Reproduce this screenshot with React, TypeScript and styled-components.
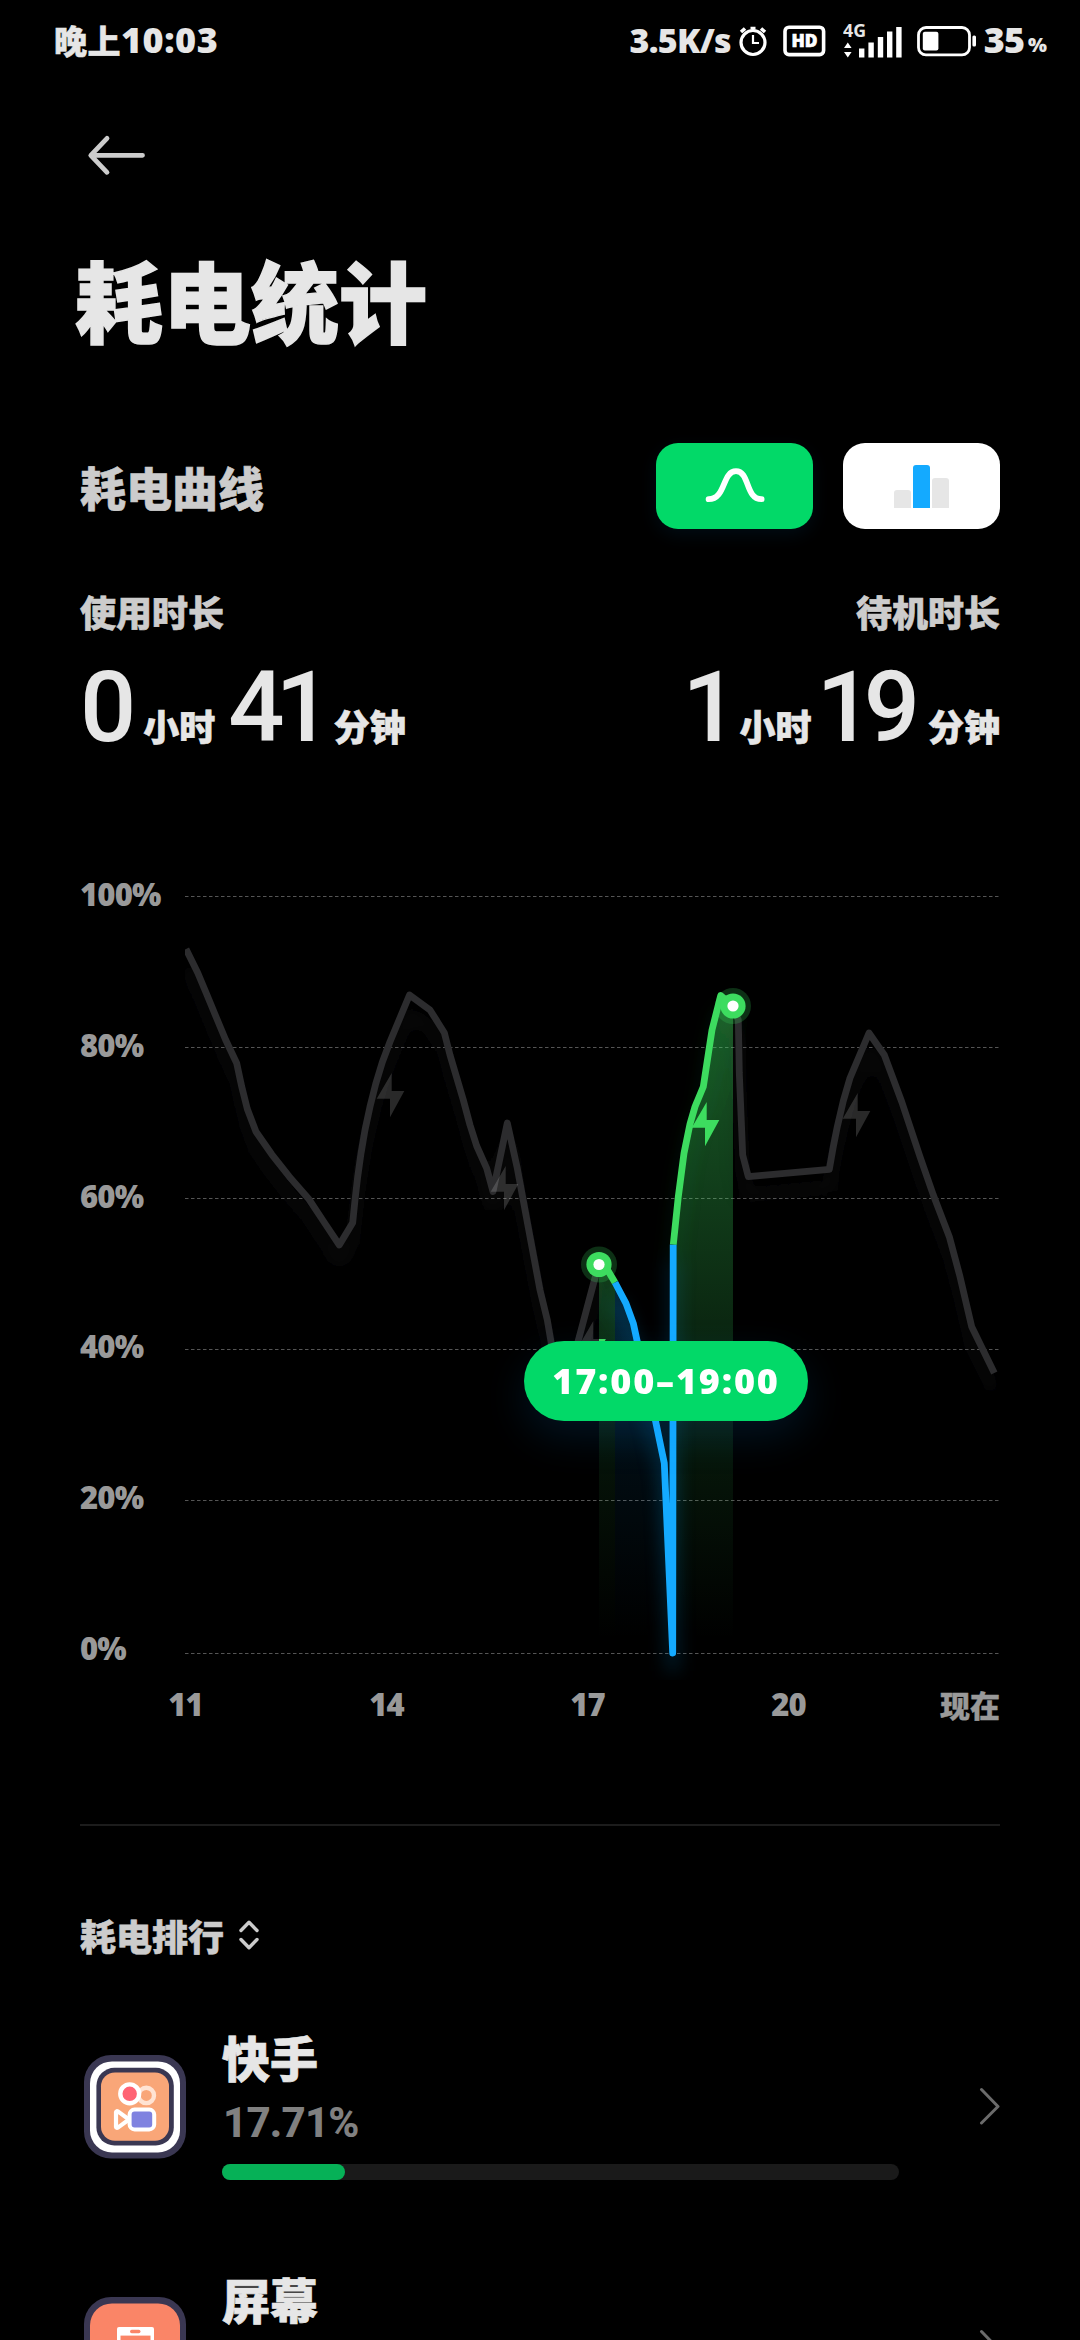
import React from 'react';
import styled, { createGlobalStyle } from 'styled-components';

const GlobalStyle = createGlobalStyle`
  * { box-sizing: border-box; }
  html, body { margin: 0; background: #000; }
  body { overflow: hidden; }
  svg { display: block; flex: none; }
`;

const cjk = `'Noto Sans CJK SC', sans-serif`;

const Screen = styled.main`
  width: 1080px;
  height: 2340px;
  overflow: hidden;
  display: flex;
  flex-direction: column;
  background: #000;
  color: #e6e6e6;
  font-family: 'Open Sans', ${cjk};
  font-weight: 900;
`;

const StatusBar = styled.header`
  flex: none;
  height: 82px;
  padding: 0 33px 0 54px;
  display: flex;
  justify-content: space-between;
  align-items: center;
`;

const Clock = styled.div`
  display: flex;
  align-items: center;
  font-size: 36px;
  line-height: 40px;
  font-weight: 800;
  letter-spacing: 0.5px;
  padding-bottom: 2px;
`;

const ClockPeriod = styled.span`
  font-family: ${cjk};
  font-size: 33px;
  font-weight: 900;
  -webkit-text-stroke: 0.5px currentColor;
`;

const StatusIcons = styled.div`
  display: flex;
  align-items: center;
`;

const StatusText = styled.span<{ $size: number; $left?: number; $spacing?: number }>`
  font-size: ${p => p.$size}px;
  line-height: 40px;
  font-weight: 800;
  margin-left: ${p => p.$left ?? 0}px;
  padding-bottom: 2px;
  letter-spacing: ${p => p.$spacing ?? 0}px;
`;

const PercentSign = styled(StatusText)`
  padding: 7px 0 0;
`;

const IconSlot = styled.span<{ $left: number }>`
  margin-left: ${p => p.$left}px;
`;

const Content = styled.div`
  flex: none;
  padding: 0 80px;
  display: flex;
  flex-direction: column;
`;

const NavRow = styled.nav`
  height: 144px;
  padding: 51px 0 0 6px;
`;

const BackButton = styled.button`
  border: 0;
  padding: 0;
  background: none;
  display: block;
`;

const Title = styled.h1`
  margin: 0 0 0 -5px;
  height: 144px;
  font-family: ${cjk};
  font-size: 88px;
  line-height: 144px;
  font-weight: 900;
  -webkit-text-stroke: 1.5px currentColor;
`;

const SectionRow = styled.div`
  margin-top: 73px;
  height: 86px;
  display: flex;
  justify-content: space-between;
  align-items: center;
`;

const Heading = styled.h2<{ $size: number }>`
  margin: 0;
  font-family: ${cjk};
  font-size: ${p => p.$size}px;
  line-height: 1.5;
  font-weight: 900;
  color: #ccc;
  -webkit-text-stroke: 0.6px currentColor;
`;

const ToggleGroup = styled.div`
  display: flex;
  gap: 30px;
`;

const ToggleButton = styled.button<{ $active?: boolean }>`
  width: 157px;
  height: 86px;
  border: 0;
  border-radius: 22px;
  padding: 0;
  display: flex;
  justify-content: center;
  align-items: center;
  background: ${p => (p.$active ? '#02d968' : '#fff')};
  box-shadow: ${p => (p.$active ? '0 6px 18px rgba(16, 150, 255, 0.08)' : 'none')};
`;

const Durations = styled.div`
  height: 246px;
  padding-top: 55px;
  display: flex;
  justify-content: space-between;
`;

const DurationBlock = styled.div<{ $end?: boolean }>`
  display: flex;
  flex-direction: column;
  align-items: ${p => (p.$end ? 'flex-end' : 'flex-start')};
`;

const DurationValue = styled.div`
  margin-top: 19px;
  height: 100px;
  display: flex;
  align-items: baseline;
`;

const Digits = styled.span<{ $left?: number; $spacing?: number }>`
  font-family: Roboto, sans-serif;
  font-weight: 500;
  font-size: 99px;
  line-height: 100px;
  margin-left: ${p => p.$left ?? 0}px;
  letter-spacing: ${p => p.$spacing ?? 0}px;
`;

const Unit = styled.span<{ $left: number }>`
  font-family: ${cjk};
  font-size: 36px;
  line-height: 50px;
  margin-left: ${p => p.$left}px;
  -webkit-text-stroke: 0.6px currentColor;
`;

const Chart = styled.section`
  margin-top: 105px;
  height: 850px;
  display: grid;
  grid-template-columns: 105px 815px;
  grid-template-rows: 800px 50px;
`;

const YAxis = styled.div`
  height: 784px;
  margin-top: -1px;
  display: flex;
  flex-direction: column;
  justify-content: space-between;
`;

const AxisLabel = styled.span`
  font-size: 31px;
  line-height: 30px;
  font-weight: 800;
  letter-spacing: -0.8px;
  color: #999;
`;

const Plot = styled.div`
  position: relative;
`;

const RangePill = styled.div`
  position: absolute;
  left: 339px;
  top: 461px;
  width: 284px;
  height: 80px;
  padding-bottom: 2px;
  border-radius: 40px;
  background: #02d968;
  box-shadow: 0 16px 40px rgba(16, 150, 255, 0.13);
  color: #fff;
  display: flex;
  justify-content: center;
  align-items: center;
  font-size: 36px;
  font-weight: 800;
  letter-spacing: 1.8px;
`;

const XAxis = styled.div`
  grid-column: 2;
  display: flex;
  padding-top: 9px;
`;

const HourTick = styled.div`
  flex: none;
  width: 201px;
  margin-left: -100px;
  margin-right: 100px;
  text-align: center;
`;

const NowTick = styled.div`
  flex: none;
  margin-left: -49px;
  font-family: ${cjk};
  font-size: 30px;
  line-height: 30px;
  color: #999;
  white-space: nowrap;
  -webkit-text-stroke: 0.4px currentColor;
`;

const Divider = styled.hr`
  margin: 94px 0 0;
  border: 0;
  width: 100%;
  height: 2px;
  background: #1c1c1c;
`;

const RankHeader = styled.div`
  margin-top: 82px;
  height: 54px;
  display: flex;
  align-items: center;
  gap: 13px;
`;

const RankList = styled.ul`
  list-style: none;
  margin: 57px 0 0;
  padding: 0;
`;

const RankItem = styled.li`
  height: 242px;
  display: flex;
  align-items: flex-start;
`;

const AppIcon = styled.div`
  margin: 36px 0 0 4px;
  width: 102px;
`;

const RankBody = styled.div`
  margin-left: 36px;
  width: 678px;
  display: flex;
  flex-direction: column;
`;

const AppName = styled.div`
  height: 72px;
  font-family: ${cjk};
  font-size: 48px;
  line-height: 74px;
  -webkit-text-stroke: 0.7px currentColor;
`;

const AppShare = styled.div`
  height: 52px;
  margin: 6px 0 0 1px;
  font-family: Roboto, sans-serif;
  font-size: 42px;
  line-height: 52px;
  font-weight: 800;
  letter-spacing: -0.8px;
  color: #808080;
`;

const Track = styled.div`
  margin-top: 15px;
  height: 16px;
  border-radius: 8px;
  background: #1a1a1a;
`;

const Fill = styled.div`
  height: 16px;
  border-radius: 8px;
  background: #06b157;
`;

const ChevronSlot = styled.div`
  margin: 68px 0 0 79px;
`;

/* ---- chart data ---- */

const historyBefore =
  '186,949 197.7,972.7 206.7,994.3 216,1016.7 225.7,1040 236.7,1063.3 241.7,1086.7 247.3,1109 256,1131.7 271.7,1154.3 289.3,1176.7 309,1199.3 323.3,1221 339.3,1245 352.7,1222.7 355,1200 357.7,1176.7 361,1153.3 365,1130 370,1106.7 375.7,1084 382.3,1062.3 390,1041.7 409.5,995 430,1010 444.3,1032.7 450,1055 463.3,1100 470,1125 476.7,1146 486.7,1168.3 493,1191.5 507.3,1123 517.3,1168.3 530,1236.7 540,1290 547.3,1320 551,1341.7 556,1370 572,1370 578,1341.7 595,1278 599,1264.5';
const historyAfter =
  '733,1006 738.3,1020 739.3,1073 742.7,1155 748.3,1176.7 829.3,1169.3 833.3,1146.7 837.3,1126.7 843.3,1101 850,1078 869,1033 884.3,1055 901.7,1101.7 920,1156.7 933.3,1195 949.3,1236.7 960,1276.7 971.7,1326.7 994.3,1373';
const greenStart = '599,1264.5 607,1269 615,1282.5';
const blueMiddle =
  '615,1282.5 626,1303.3 633.3,1323.3 637.3,1341.7 655.7,1421.7 664.3,1463.3 672.7,1653 673.2,1244.5';
const greenEnd =
  '673.3,1244.5 678.3,1196.7 684,1153.3 690,1124 695,1106.7 703.3,1086.7 712,1030 720.7,995.5 733,1006';

const gridLines = [896.5, 1047.5, 1198.5, 1349.5, 1500.5, 1653.5];
const bolt = '1.7,-22 -13.3,3.7 0,3.7 0,22.3 14.3,-4 1.7,-4';
const idleBolts = [[390, 1095], [504, 1188], [591.6, 1343], [856, 1115]];
const markers = [[599, 1264.5], [733, 1006]];

const BatteryCurve = () => (
  <svg width="815" height="800" viewBox="185 880 815 800">
    <defs>
      <linearGradient id="greenFill" gradientUnits="userSpaceOnUse" x1="0" y1="995" x2="0" y2="1640">
        <stop offset="0" stopColor="#3ddc5f" stopOpacity="0.42" />
        <stop offset="0.55" stopColor="#3ddc5f" stopOpacity="0.16" />
        <stop offset="1" stopColor="#3ddc5f" stopOpacity="0" />
      </linearGradient>
      <linearGradient id="greenFillLow" gradientUnits="userSpaceOnUse" x1="0" y1="1264" x2="0" y2="1640">
        <stop offset="0" stopColor="#3ddc5f" stopOpacity="0.3" />
        <stop offset="0.5" stopColor="#3ddc5f" stopOpacity="0.09" />
        <stop offset="1" stopColor="#3ddc5f" stopOpacity="0" />
      </linearGradient>
      <linearGradient id="blueFill" gradientUnits="userSpaceOnUse" x1="0" y1="1282" x2="0" y2="1640">
        <stop offset="0" stopColor="#14aaff" stopOpacity="0.22" />
        <stop offset="0.5" stopColor="#14aaff" stopOpacity="0.07" />
        <stop offset="1" stopColor="#14aaff" stopOpacity="0" />
      </linearGradient>
      <filter id="soft" filterUnits="userSpaceOnUse" x="150" y="880" width="880" height="820">
        <feGaussianBlur stdDeviation="9" />
      </filter>
      <clipPath id="selected">
        <rect x="599" y="880" width="134" height="800" />
      </clipPath>
      <clipPath id="beforeSelected">
        <rect x="185" y="880" width="414" height="800" />
      </clipPath>
    </defs>

    <g stroke="#555" strokeWidth="1" strokeDasharray="3.5 2.5">
      {gridLines.map(y => <line key={y} x1="185" x2="998.5" y1={y} y2={y} />)}
    </g>

    <polygon points="599,1264.5 607,1269 615,1282.5 615,1640 599,1640" fill="url(#greenFillLow)" />
    <polygon points="615,1282.5 626,1303.3 633.3,1323.3 637.3,1341.7 655.7,1421.7 664.3,1463.3 672.5,1640 615,1640" fill="url(#blueFill)" />
    <polygon points={`${greenEnd} 733,1640 673.3,1640`} fill="url(#greenFill)" />

    <g fill="none" strokeWidth="8" filter="url(#soft)" transform="translate(0 18)">
      <polyline points={historyBefore} stroke="#2c2c2e" opacity="0.25" />
      <polyline points={historyAfter} stroke="#2c2c2e" opacity="0.25" />
      <polyline points={blueMiddle} stroke="#14aaff" opacity="0.25" />
      <polyline points={greenEnd} stroke="#3ddc5f" opacity="0.12" />
    </g>

    <g fill="none" strokeWidth="6.8" strokeLinejoin="round">
      <polyline points={historyBefore} stroke="#2c2c2e" />
      <polyline points={historyAfter} stroke="#2c2c2e" />
      <polyline points={greenStart} stroke="#3ddc5f" />
      <polyline points={blueMiddle} stroke="#14aaff" />
      <polyline points={greenEnd} stroke="#3ddc5f" />
    </g>

    <g fill="#fff" fillOpacity="0.16">
      {idleBolts.map(([x, y]) => (
        <g key={x} clipPath={x < 599 ? 'url(#beforeSelected)' : undefined}>
          <polygon points={bolt} transform={`translate(${x} ${y})`} />
        </g>
      ))}
    </g>
    <g fill="#3ddc5f" clipPath="url(#selected)">
      <polygon points={bolt} transform="translate(591.6 1343)" />
      <polygon points={bolt} transform="translate(705 1124)" />
    </g>

    {markers.map(([x, y]) => (
      <g key={x}>
        <circle cx={x} cy={y} r="18" fill="#3ddc5f" fillOpacity="0.22" />
        <circle cx={x} cy={y} r="12.6" fill="#3ddc5f" />
        <circle cx={x} cy={y} r="5.6" fill="#fff" />
      </g>
    ))}
  </svg>
);

/* ---- icons ---- */

const AlarmIcon = () => (
  <svg width="30" height="32" viewBox="0 0 30 32" fill="none" stroke="#fff">
    <circle cx="15" cy="17.5" r="12" strokeWidth="3.2" />
    <path d="M15 10v8h6" strokeWidth="2.2" />
    <path d="M15 2v4M12.5 3h5" strokeWidth="2.6" />
    <path d="M3 7l4-3.5M27 7l-4-3.5" strokeWidth="3.6" />
  </svg>
);

const HdText = styled.text`
  font-family: 'Open Sans', sans-serif;
  font-weight: 800;
  font-size: 17.5px;
  fill: #fff;
`;

const HdIcon = () => (
  <svg width="43" height="32" viewBox="0 0 43 32">
    <rect x="2" y="2.2" width="38.6" height="27.4" rx="4" fill="none" stroke="#fff" strokeWidth="3.6" />
    <HdText x="8.4" y="22" textLength="26" lengthAdjust="spacingAndGlyphs" stroke="#fff" strokeWidth="0.6">HD</HdText>
  </svg>
);

const NetText = styled.text`
  font-family: 'Open Sans', sans-serif;
  font-weight: 700;
  font-size: 17px;
  fill: #e6e6e6;
`;

const SignalIcon = () => (
  <svg width="60" height="54" viewBox="0 -10 60 54" fill="#fff">
    <NetText x="0" y="13" textLength="23" lengthAdjust="spacingAndGlyphs">4G</NetText>
    <path d="M4.8 18.5l3.8 5.600H1zM4.800 33.500l-3.800-5.600h7.600z" />
    <rect x="16" y="24.5" width="5.4" height="9" />
    <rect x="25.4" y="18.5" width="5.4" height="15" />
    <rect x="34.8" y="13" width="5.4" height="20.5" />
    <rect x="44" y="7.5" width="5.4" height="26" />
    <rect x="53.2" y="3" width="5.4" height="30.5" />
  </svg>
);

const BatteryIcon = () => (
  <svg width="60" height="31" viewBox="0 0 60 31" fill="#fff">
    <rect x="1.5" y="1.5" width="51" height="27.4" rx="7.5" fill="none" stroke="#fff" strokeWidth="2.8" />
    <rect x="5.8" y="5.8" width="15.6" height="18.6" rx="2" />
    <rect x="55.4" y="9.6" width="3.6" height="11" rx="1.5" />
  </svg>
);

const BackIcon = () => (
  <svg width="60" height="44" viewBox="0 0 60 44" fill="none" stroke="#ccc" strokeWidth="4.8" strokeLinecap="round" strokeLinejoin="round">
    <path d="M21 5.3L4.8 22.3l16.2 17M5 22.3h51.5" />
  </svg>
);

const CurveIcon = () => (
  <svg width="60" height="36" viewBox="0 0 60 36" fill="none" stroke="#fff" strokeWidth="5.8" strokeLinecap="round">
    <path d="M3.6 31.2C21 31.2 17 3.2 31 3.2S40 31.2 56.6 31.2" />
  </svg>
);

const BarsIcon = () => (
  <svg width="56" height="43" viewBox="0 0 56 43">
    <path d="M0 43V28a3 3 0 0 1 3-3h11a3 3 0 0 1 3 3v15z" fill="#e6e6e6" />
    <path d="M19 43V3a3 3 0 0 1 3-3h11a3 3 0 0 1 3 3v40z" fill="#14aaff" />
    <path d="M38 43V16a3 3 0 0 1 3-3h11a3 3 0 0 1 3 3v27z" fill="#e6e6e6" />
  </svg>
);

const SortIcon = () => (
  <svg width="24" height="32" viewBox="0 0 24 32" fill="none" stroke="#ccc" strokeWidth="3.4" strokeLinecap="round" strokeLinejoin="round">
    <path d="M4 11.5L12 3.3l8 8.2M4 20.5l8 8.2 8-8.2" />
  </svg>
);

const ChevronIcon = () => (
  <svg width="22" height="38" viewBox="0 0 22 38" fill="none" stroke="#6b6b6b" strokeWidth="3" strokeLinecap="round" strokeLinejoin="round">
    <path d="M3.5 2.5L20 19.5 3.5 36" />
  </svg>
);

const KuaishouIcon = () => (
  <svg width="102" height="104" viewBox="0 0 102 104">
    <rect width="102" height="103.6" rx="27" fill="#3a3752" />
    <rect x="6" y="6.4" width="90" height="91" rx="22" fill="#fff" />
    <rect x="12.4" y="12.8" width="77.4" height="77.6" rx="18" fill="#3a3752" />
    <rect x="17" y="17.4" width="68" height="68.4" rx="14" fill="#f9a678" />
    <circle cx="62.3" cy="40.4" r="7.7" fill="none" stroke="#ffe3d3" strokeWidth="4.4" />
    <circle cx="45.7" cy="38.8" r="9.4" fill="#ff6374" stroke="#fff" strokeWidth="4.4" />
    <path d="M32 57.2v14.6q.3 1.6 2.2.6L45 64.5 34.2 56.6Q32.3 55.6 32 57.2z" fill="#f9a678" stroke="#fff" strokeWidth="4.2" strokeLinejoin="round" />
    <rect x="45.6" y="54.6" width="24.6" height="19.8" rx="5" fill="#7f82e0" stroke="#fff" strokeWidth="4" />
  </svg>
);

const ScreenIcon = () => (
  <svg width="102" height="104" viewBox="0 0 102 104">
    <rect width="102" height="103.6" rx="27" fill="#3a3752" />
    <rect x="6" y="6.4" width="90" height="91" rx="22" fill="#fa8567" />
    <rect x="33" y="30" width="37" height="52" rx="2" fill="#fff" />
    <rect x="36.5" y="38.6" width="30" height="34" fill="#fa8567" />
    <rect x="46" y="32.8" width="10.5" height="3.4" rx="1.7" fill="#fa8567" />
  </svg>
);

const apps: { name: string; share?: number; width?: number; Icon: React.FC }[] = [
  { name: '快手', share: 17.71, width: 18.2, Icon: KuaishouIcon },
  { name: '屏幕', Icon: ScreenIcon },
];

export default function App() {
  return (
    <>
      <GlobalStyle />
      <Screen>
        <StatusBar>
          <Clock><ClockPeriod>晚上</ClockPeriod>10:03</Clock>
          <StatusIcons>
            <StatusText $size={34} $spacing={-0.7}>3.5K/s</StatusText>
            <IconSlot $left={7}><AlarmIcon /></IconSlot>
            <IconSlot $left={15}><HdIcon /></IconSlot>
            <IconSlot $left={17}><SignalIcon /></IconSlot>
            <IconSlot $left={14}><BatteryIcon /></IconSlot>
            <StatusText $size={36} $left={7} $spacing={-1}>35</StatusText>
            <PercentSign $size={20} $left={4}>%</PercentSign>
          </StatusIcons>
        </StatusBar>
        <Content>
          <NavRow><BackButton aria-label="返回"><BackIcon /></BackButton></NavRow>
          <Title>耗电统计</Title>
          <SectionRow>
            <Heading $size={46}>耗电曲线</Heading>
            <ToggleGroup>
              <ToggleButton $active><CurveIcon /></ToggleButton>
              <ToggleButton><BarsIcon /></ToggleButton>
            </ToggleGroup>
          </SectionRow>
          <Durations>
            <DurationBlock>
              <Heading $size={36}>使用时长</Heading>
              <DurationValue>
                <Digits>0</Digits><Unit $left={7}>小时</Unit>
                <Digits $left={13} $spacing={-9}>41</Digits><Unit $left={11}>分钟</Unit>
              </DurationValue>
            </DurationBlock>
            <DurationBlock $end>
              <Heading $size={36}>待机时长</Heading>
              <DurationValue>
                <Digits>1</Digits><Unit $left={1}>小时</Unit>
                <Digits $left={5} $spacing={-9}>19</Digits><Unit $left={17}>分钟</Unit>
              </DurationValue>
            </DurationBlock>
          </Durations>
          <Chart>
            <YAxis>
              {['100%', '80%', '60%', '40%', '20%', '0%'].map(t => <AxisLabel key={t}>{t}</AxisLabel>)}
            </YAxis>
            <Plot>
              <BatteryCurve />
              <RangePill>17:00–19:00</RangePill>
            </Plot>
            <XAxis>
              {['11', '14', '17', '20'].map(t => <HourTick key={t}><AxisLabel>{t}</AxisLabel></HourTick>)}
              <NowTick>现在</NowTick>
            </XAxis>
          </Chart>
          <Divider />
          <RankHeader><Heading $size={36}>耗电排行</Heading><SortIcon /></RankHeader>
          <RankList>
            {apps.map(({ name, share, width, Icon }) => (
              <RankItem key={name}>
                <AppIcon><Icon /></AppIcon>
                <RankBody>
                  <AppName>{name}</AppName>
                  {share !== undefined && (
                    <>
                      <AppShare>{share}%</AppShare>
                      <Track><Fill style={{ width: `${width}%` }} /></Track>
                    </>
                  )}
                </RankBody>
                <ChevronSlot><ChevronIcon /></ChevronSlot>
              </RankItem>
            ))}
          </RankList>
        </Content>
      </Screen>
    </>
  );
}
